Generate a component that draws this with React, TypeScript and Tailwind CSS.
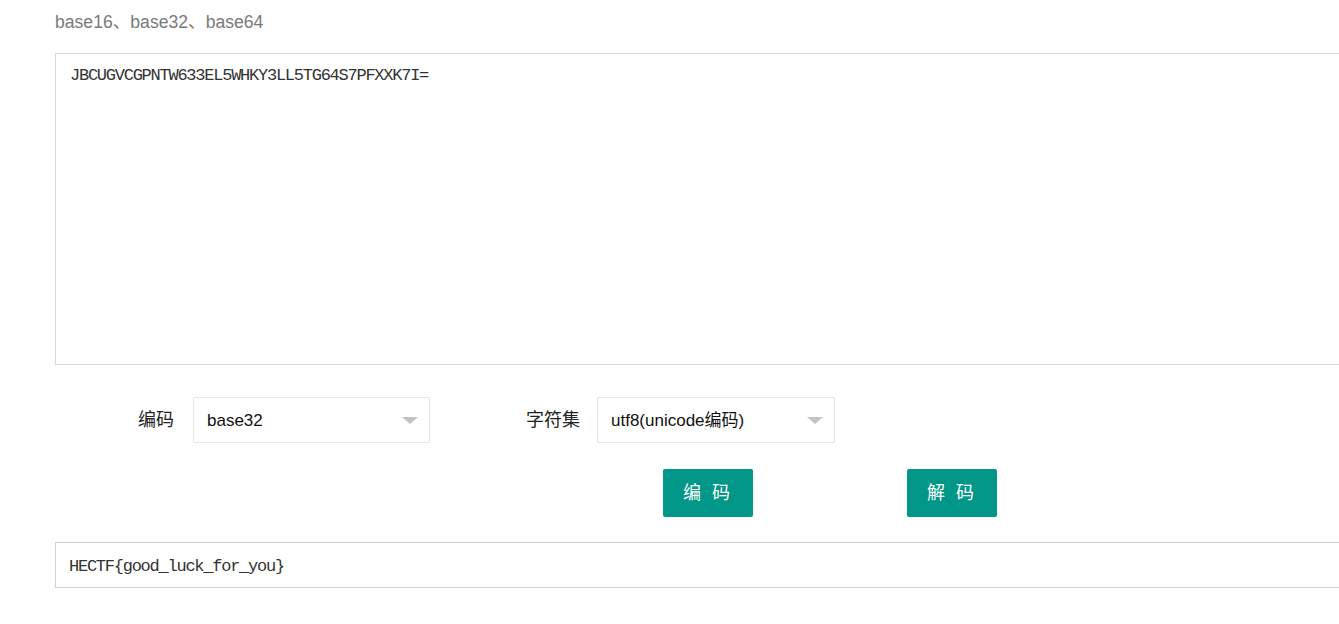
import React from "react";

const cjk = { fontFamily: '"Liberation Sans", "Noto Sans CJK SC", sans-serif' };
const mono = { fontFamily: '"Liberation Mono", "Noto Sans CJK SC", monospace' };

function Caret() {
  return (
    <svg width="16" height="8" viewBox="0 0 16 8" className="block">
      <polygon points="0,0 16,0 8,7" fill="#c2c2c2" />
    </svg>
  );
}

function Select({ value, w }: { value: string; w: string }) {
  return (
    <div
      className={`${w} h-[46px] border border-[#e6e6e6] rounded-[2px] flex items-center justify-between pl-[13px] pr-[11px] pt-[2px] text-[17px] text-[#111]`}
      style={cjk}
    >
      <span>{value}</span>
      <Caret />
    </div>
  );
}

export default function App() {
  return (
    <div className="w-[1339px] h-[624px] overflow-hidden bg-white pl-[55px]" style={cjk}>
      <div className="pt-[9px] text-[17.6px] leading-[26px] text-[#7a7a7a]">base16、base32、base64</div>
      <div
        className="mt-[18px] h-[312px] w-[1320px] border border-[#d9d9d9] pl-[14px] pt-[12px] text-[17px] leading-[20px] tracking-[-1.25px] text-[#333]"
        style={mono}
      >
        JBCUGVCGPNTW633EL5WHKY3LL5TG64S7PFXXK7I=
      </div>
      <div className="mt-[32px] flex items-center h-[46px]">
        <div className="w-[138px] pr-[19px] text-right text-[18px] text-[#222]">编码</div>
        <Select value="base32" w="w-[237px]" />
        <div className="w-[167px] pr-[17px] text-right text-[18px] text-[#222]">字符集</div>
        <Select value="utf8(unicode编码)" w="w-[238px]" />
      </div>
      <div className="mt-[26px] flex">
        <div className="ml-[608px] w-[90px] h-[48px] bg-[#009688] rounded-[2px] flex items-center justify-center text-white text-[18px] tracking-[3px]">
          编 码
        </div>
        <div className="ml-[154px] w-[90px] h-[48px] bg-[#009688] rounded-[2px] flex items-center justify-center text-white text-[18px] tracking-[3px]">
          解 码
        </div>
      </div>
      <div
        className="mt-[25px] h-[46px] w-[1320px] border border-[#d2d2d2] pl-[13px] pt-[3px] flex items-center text-[17px] tracking-[-1.25px] text-[#333]"
        style={mono}
      >
        HECTF{"{"}good_luck_for_you{"}"}
      </div>
    </div>
  );
}
